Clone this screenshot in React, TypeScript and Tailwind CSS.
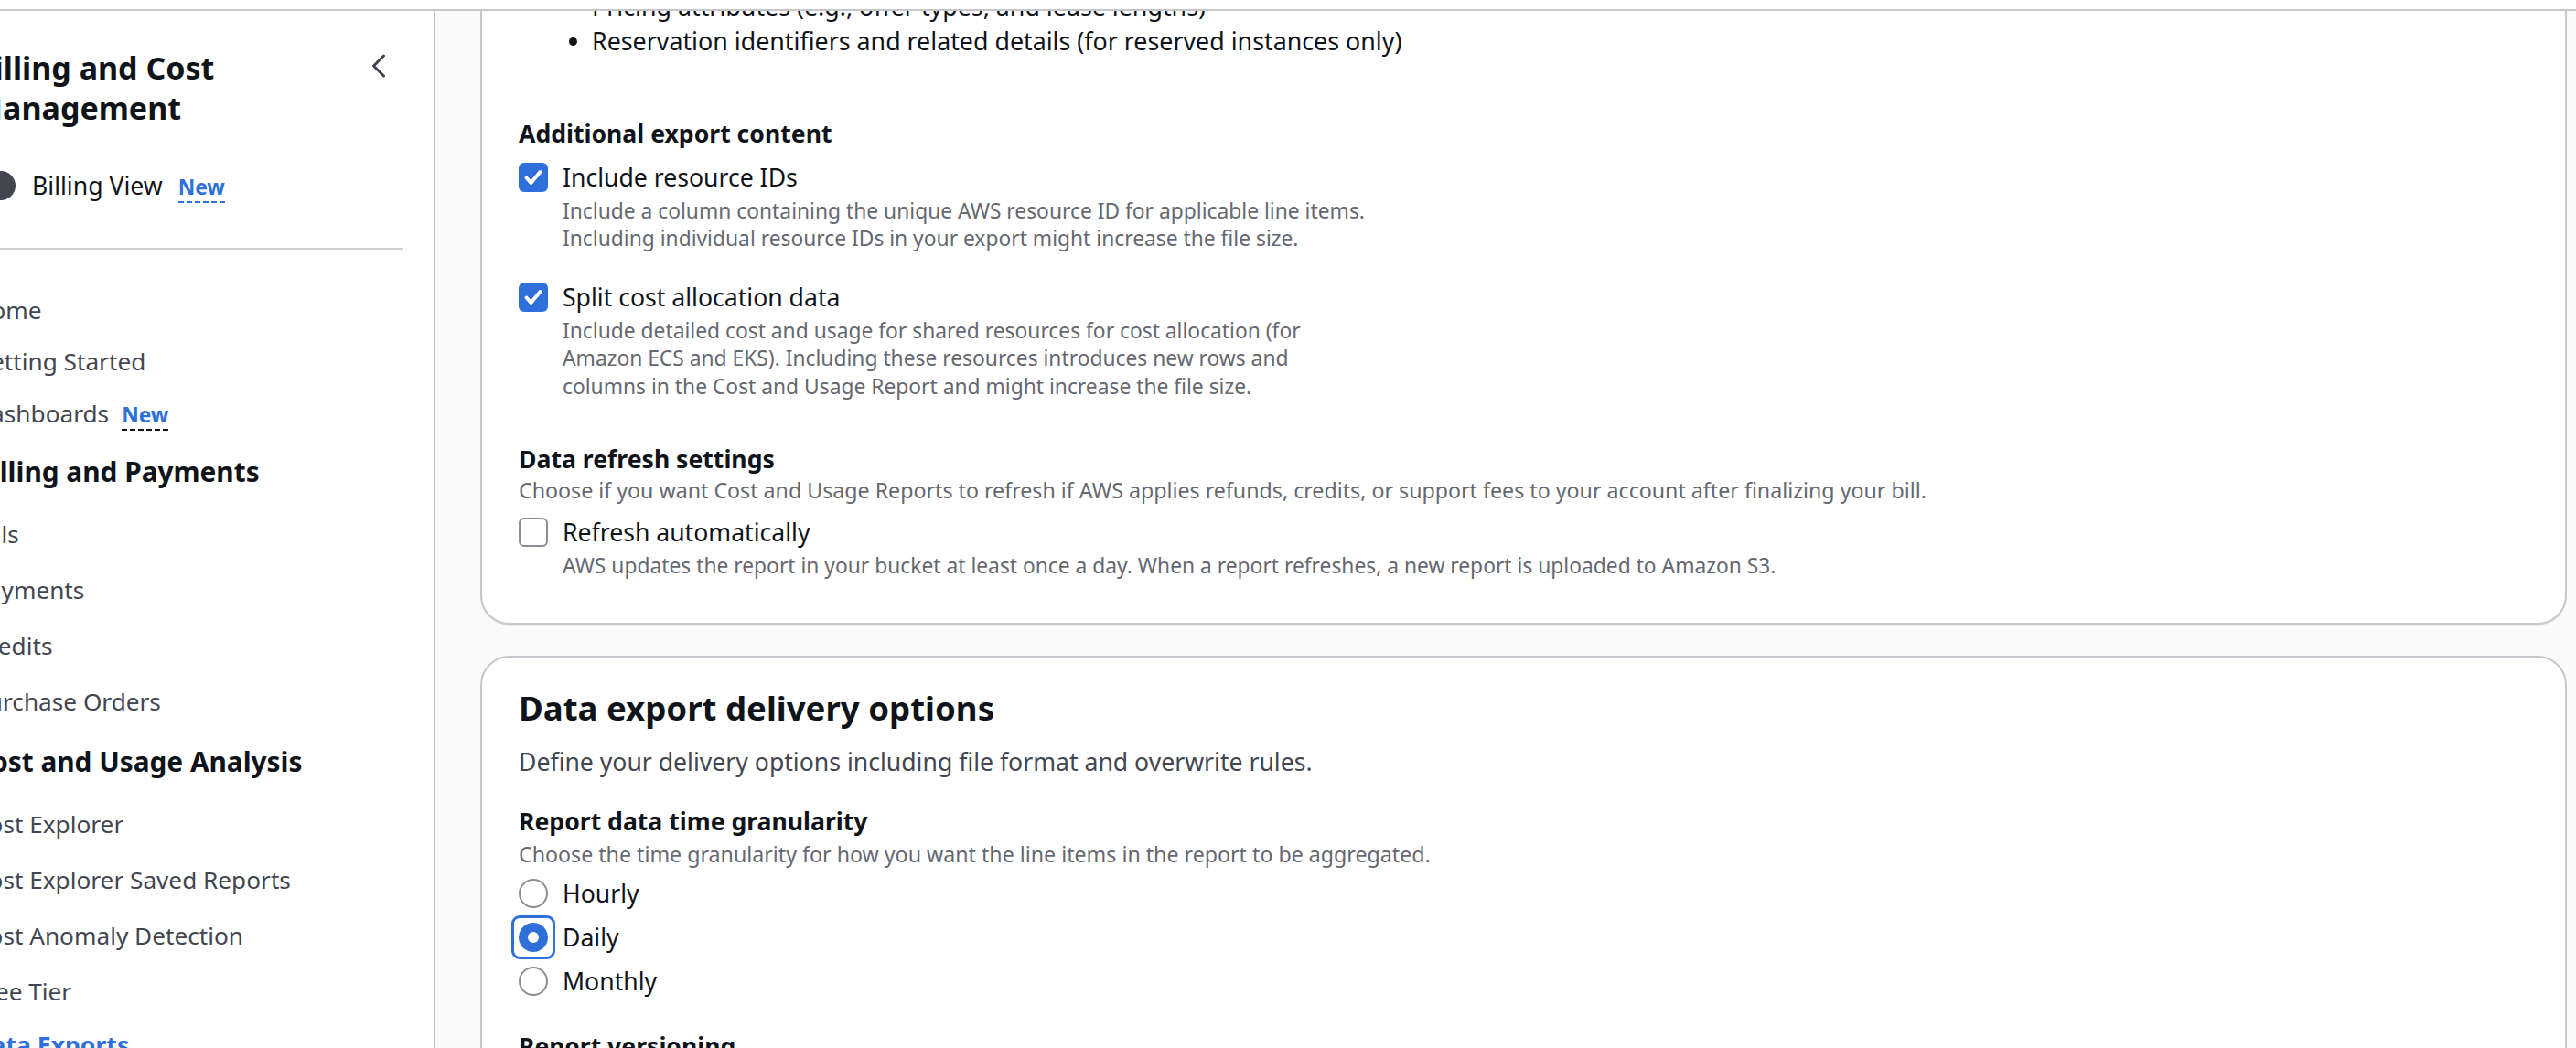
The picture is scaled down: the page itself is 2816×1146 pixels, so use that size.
import React from 'react';

type NavItem = {
    label: string;
    kind: 'link' | 'heading' | 'active';
    gap: string;
    badge?: boolean;
};

const navItems: NavItem[] = [
    { label: 'Home', kind: 'link', gap: 'mt-0' },
    { label: 'Getting Started', kind: 'link', gap: 'mt-[18px]' },
    { label: 'Dashboards', kind: 'link', gap: 'mt-[19px]', badge: true },
    { label: 'Billing and Payments', kind: 'heading', gap: 'mt-[26px]' },
    { label: 'Bills', kind: 'link', gap: 'mt-[30px]' },
    { label: 'Payments', kind: 'link', gap: 'mt-[23px]' },
    { label: 'Credits', kind: 'link', gap: 'mt-[23px]' },
    { label: 'Purchase Orders', kind: 'link', gap: 'mt-[23px]' },
    { label: 'Cost and Usage Analysis', kind: 'heading', gap: 'mt-[28px]' },
    { label: 'Cost Explorer', kind: 'link', gap: 'mt-[30px]' },
    { label: 'Cost Explorer Saved Reports', kind: 'link', gap: 'mt-[23px]' },
    { label: 'Cost Anomaly Detection', kind: 'link', gap: 'mt-[23px]' },
    { label: 'Free Tier', kind: 'link', gap: 'mt-[23px]' },
    { label: 'Data Exports', kind: 'active', gap: 'mt-[21px]' },
];

const Checkbox: React.FC<{ checked: boolean }> = ({ checked }) => (
    <span
        className={`mt-[3px] flex h-[32px] w-[32px] shrink-0 items-center justify-center rounded-[6px] ${
            checked ? 'bg-[#2f6fd9]' : 'border-2 border-[#8c8c94] bg-white'
        }`}
    >
        {checked && (
            <svg viewBox="0 0 32 32" className="h-[32px] w-[32px]">
                <path d="M8.5 16.5l5 5.5L23.5 10" fill="none" stroke="white" strokeWidth={4} strokeLinecap="round" strokeLinejoin="round" />
            </svg>
        )}
    </span>
);

const CheckRow: React.FC<{ checked: boolean; label: string; lines: string[]; className?: string }> = ({ checked, label, lines, className }) => (
    <div className={`flex items-start gap-[16px] ${className ?? ''}`}>
        <Checkbox checked={checked} />
        <div>
            <div className="text-[26.6px] leading-[38px] text-[#0f141a]">{label}</div>
            <div className="mt-[3px] text-[22.8px] leading-[30.4px] text-[#656871]">
                {lines.map(l => (
                    <div key={l}>{l}</div>
                ))}
            </div>
        </div>
    </div>
);

const Radio: React.FC<{ label: string; checked?: boolean; className?: string }> = ({ label, checked, className }) => (
    <div className={`flex h-[38px] items-center gap-[16px] ${className ?? ''}`}>
        <span className="relative flex h-[32px] w-[32px] shrink-0">
            {checked ? (
                <>
                    <span className="absolute -inset-[8px] rounded-[9px] border-[3px] border-[#2f6fd9]" />
                    <span className="flex h-[32px] w-[32px] items-center justify-center rounded-full bg-[#2f6fd9]">
                        <span className="h-[12px] w-[12px] rounded-full bg-white" />
                    </span>
                </>
            ) : (
                <span className="h-[32px] w-[32px] rounded-full border-2 border-[#8c8c94] bg-white" />
            )}
        </span>
        <span className="text-[26.6px] leading-[38px] text-[#0f141a]">{label}</span>
    </div>
);

const Sidebar: React.FC = () => (
    <aside className="w-[476px] shrink-0 overflow-hidden border-r-2 border-[#c6c6cd] bg-white">
        <div className="-ml-[29px] pr-[33px] pt-[40px]">
            <div className="flex items-start justify-between">
                <h2 className="text-[34px] font-bold leading-[44px] text-[#0f141a]">
                    Billing and Cost
                    <br />
                    Management
                </h2>
                <button className="mr-[9px] mt-[2px] flex h-[36px] w-[36px] items-center justify-center text-[#424650]" aria-label="Close navigation">
                    <svg viewBox="0 0 16 26" className="h-[26px] w-[16px]" fill="none" stroke="currentColor" strokeWidth={3} strokeLinecap="round" strokeLinejoin="round">
                        <path d="M13.5 2L2.5 13l11 11" />
                    </svg>
                </button>
            </div>

            <div className="mt-[44px] flex h-[38px] items-center">
                <span className="h-[32px] w-[46px] shrink-0 rounded-full bg-[#414650]" />
                <span className="ml-[18px] text-[26.6px] leading-[38px] text-[#0f141a]">Billing View</span>
                <span className="ml-[17px] mt-[6px] border-b-2 border-dashed border-[#2f6fd9] pb-[1px] text-[22.8px] font-bold leading-[28px] text-[#2f6fd9]">
                    New
                </span>
            </div>

            <div className="mt-[49px] h-[2px] bg-[#cfcfd4]" />

            <nav className="mt-[47px] flex flex-col">
                {navItems.map(item => (
                    <div key={item.label} className={`${item.gap} flex h-[38px] items-center`}>
                        {item.kind === 'heading' ? (
                            <span className="whitespace-nowrap text-[29.8px] font-bold leading-[38px] text-[#0f141a]">{item.label}</span>
                        ) : item.kind === 'active' ? (
                            <span className="whitespace-nowrap text-[26.6px] font-bold leading-[38px] text-[#2f6fd9]">{item.label}</span>
                        ) : (
                            <span className="whitespace-nowrap text-[26.2px] leading-[38px] text-[#424650]">{item.label}</span>
                        )}
                        {item.badge && (
                            <span className="ml-[14px] mt-[6px] border-b-2 border-dashed border-[#0f141a] pb-[1px] text-[22.8px] font-bold leading-[28px] text-[#2f6fd9]">
                                New
                            </span>
                        )}
                    </div>
                ))}
            </nav>
        </div>
    </aside>
);

const Bullet: React.FC<{ text: string }> = ({ text }) => (
    <li className="flex items-center leading-[38px]">
        <span className="ml-[55px] mr-[16px] h-[9px] w-[9px] shrink-0 rounded-full bg-[#0f141a]" />
        <span>{text}</span>
    </li>
);

const App: React.FC = () => {
    return (
        <div className="flex h-[1146px] w-[2816px] flex-col overflow-hidden bg-white font-['Noto_Sans',sans-serif]">
            <div className="h-[12px] shrink-0 border-b-2 border-[#c6c6cd] bg-white" />
            <div className="flex min-h-0 flex-1">
                <Sidebar />
                <main className="min-w-0 flex-1 overflow-hidden bg-[#fafafa] pl-[49px] pr-[10px]">
                    {/* export content card (scrolled, top is hidden) */}
                    <section className="-mt-[60px] rounded-[32px] border-2 border-[#c6c6cd] bg-white px-[40px] pb-[46px] pt-[34px] shadow-[0_1px_1px_rgba(0,0,0,0.08)]">
                        <ul className="text-[26.8px] text-[#0f141a]">
                            <Bullet text="Pricing attributes (e.g., offer types, and lease lengths)" />
                            <Bullet text="Reservation identifiers and related details (for reserved instances only)" />
                        </ul>

                        <h3 className="mt-[63px] text-[26.6px] font-bold leading-[38px] text-[#0f141a]">Additional export content</h3>
                        <CheckRow
                            className="mt-[10px]"
                            checked
                            label="Include resource IDs"
                            lines={[
                                'Include a column containing the unique AWS resource ID for applicable line items.',
                                'Including individual resource IDs in your export might increase the file size.',
                            ]}
                        />
                        <CheckRow
                            className="mt-[29px]"
                            checked
                            label="Split cost allocation data"
                            lines={[
                                'Include detailed cost and usage for shared resources for cost allocation (for',
                                'Amazon ECS and EKS). Including these resources introduces new rows and',
                                'columns in the Cost and Usage Report and might increase the file size.',
                            ]}
                        />

                        <h3 className="mt-[45px] text-[26.6px] font-bold leading-[38px] text-[#0f141a]">Data refresh settings</h3>
                        <p className="text-[23.2px] leading-[30.4px] text-[#656871]">
                            Choose if you want Cost and Usage Reports to refresh if AWS applies refunds, credits, or support fees to your account after finalizing your bill.
                        </p>
                        <CheckRow
                            className="mt-[12px]"
                            checked={false}
                            label="Refresh automatically"
                            lines={['AWS updates the report in your bucket at least once a day. When a report refreshes, a new report is uploaded to Amazon S3.']}
                        />
                    </section>

                    {/* delivery options card */}
                    <section className="mt-[34px] rounded-[32px] border-2 border-[#c6c6cd] bg-white px-[40px] pb-[40px] pt-[32px]">
                        <h2 className="text-[36.6px] font-bold leading-[46px] text-[#0f141a]">Data export delivery options</h2>
                        <p className="mt-[17px] text-[26.6px] leading-[38px] text-[#424650]">
                            Define your delivery options including file format and overwrite rules.
                        </p>

                        <h3 className="mt-[27px] text-[26.6px] font-bold leading-[38px] text-[#0f141a]">Report data time granularity</h3>
                        <p className="mt-[2px] text-[23.2px] leading-[30.4px] text-[#656871]">
                            Choose the time granularity for how you want the line items in the report to be aggregated.
                        </p>
                        <div className="mt-[9px] flex flex-col gap-[10px]">
                            <Radio label="Hourly" />
                            <Radio label="Daily" checked />
                            <Radio label="Monthly" />
                        </div>

                        <h3 className="mt-[33px] text-[26.6px] font-bold leading-[38px] text-[#0f141a]">Report versioning</h3>
                    </section>
                </main>
            </div>
        </div>
    );
};

export default App;
